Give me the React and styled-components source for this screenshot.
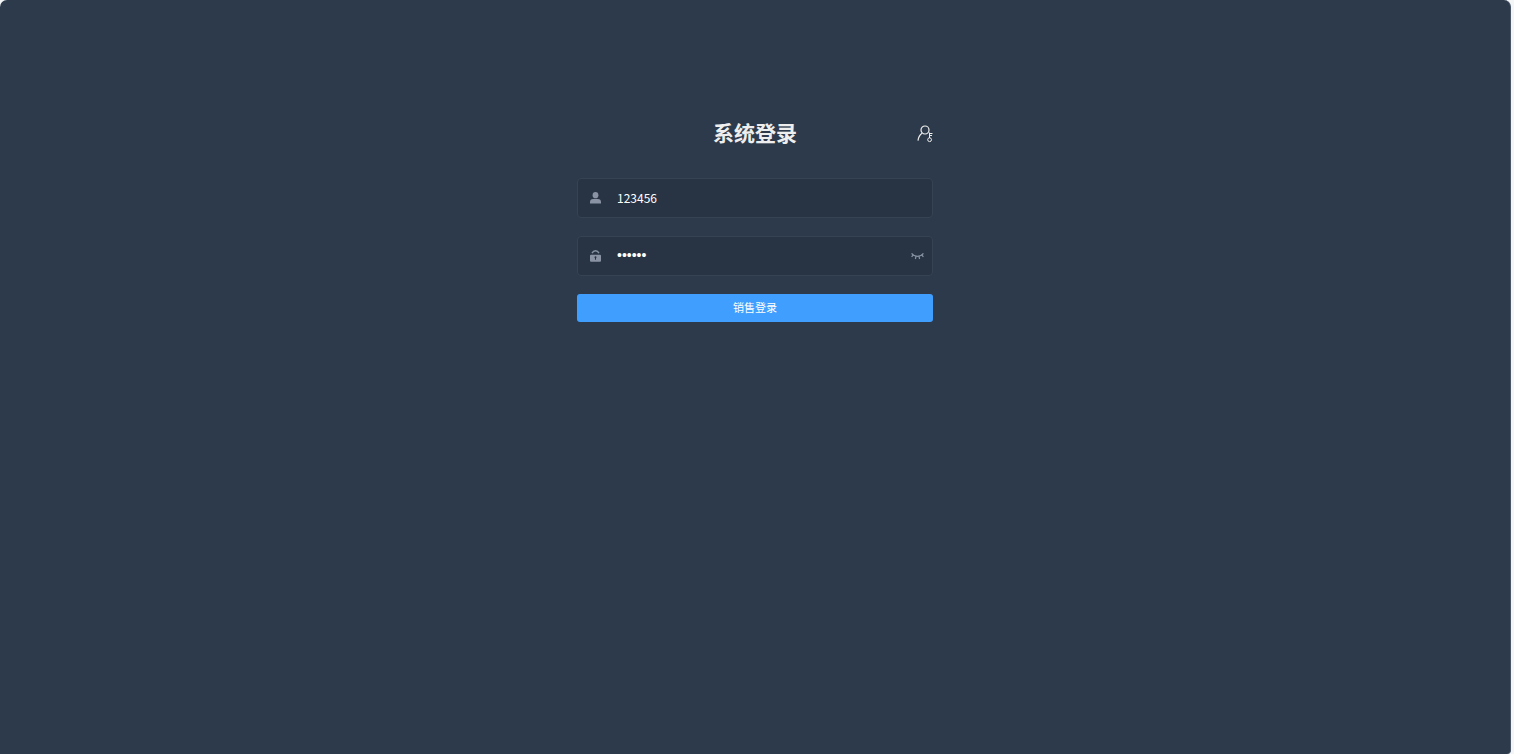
import React, { useState } from "react";
import styled, { createGlobalStyle } from "styled-components";

const Colors = {
    PAGE: "#f3f5f7",
    BACKGROUND: "#2d3a4b",
    EDGE: "#4a5666",
    FIELD: "#283443",
    FIELD_BORDER: "#364353",
    ICON: "#8993a3",
    TITLE: "#eeeeee",
    TEXT: "#ffffff",
    PRIMARY: "#409eff",
};

const GlobalStyle = createGlobalStyle`
    * {
        box-sizing: border-box;
    }

    body {
        margin: 0;
        background-color: ${Colors.PAGE};
        font-family: "Noto Sans CJK SC", sans-serif;
    }
`;

const Page = styled.main`
    min-height: 100vh;
    margin-right: 3px;
    padding: 116px 24px 24px;
    border-right: 1px solid ${Colors.EDGE};
    border-radius: 7px 7px 4px 0;
    background-color: ${Colors.BACKGROUND};
`;

const LoginForm = styled.form`
    width: 100%;
    max-width: 356px;
    margin: 0 auto;
    display: flex;
    flex-direction: column;
    gap: 18px;
`;

const Header = styled.div`
    display: grid;
    grid-template-columns: 1fr auto 1fr;
    align-items: start;
    height: 36px;
    margin-bottom: 8px;
`;

const Title = styled.h1`
    grid-column: 2;
    margin: 0;
    color: ${Colors.TITLE};
    font-size: 21px;
    line-height: 32px;
    font-weight: 700;
`;

const IconButton = styled.button`
    display: flex;
    align-items: center;
    justify-self: end;
    height: 36px;
    padding: 0;
    border: none;
    background: none;
    color: ${(props) => props.$color};
    cursor: pointer;
`;

const Field = styled.div`
    display: flex;
    align-items: center;
    height: 40px;
    padding: 0 8px 0 11px;
    border: 1px solid ${Colors.FIELD_BORDER};
    border-radius: 4px;
    background-color: ${Colors.FIELD};
`;

const FieldLabel = styled.label`
    display: flex;
    width: 28px;
    color: ${Colors.ICON};
`;

const Input = styled.input`
    flex: 1;
    min-width: 0;
    height: 38px;
    padding: 0 0 2px;
    border: none;
    outline: none;
    background: none;
    color: ${Colors.TEXT};
    font-family: ${(props) => (props.type === "password" ? '"Liberation Sans", sans-serif' : "inherit")};
    font-size: ${(props) => (props.type === "password" ? "14px" : "12px")};
`;

const LoginButton = styled.button`
    height: 28px;
    padding: 0 12px 2px;
    border: none;
    border-radius: 3px;
    background-color: ${Colors.PRIMARY};
    color: ${Colors.TEXT};
    font-family: inherit;
    font-size: 11px;
    cursor: pointer;
`;

function SwitchUserIcon() {
    return (
        <svg width="16" height="18" viewBox="0 0 16 18" fill="none" stroke="currentColor" aria-hidden="true">
            <circle cx="8" cy="5" r="4" strokeWidth="1.2" />
            <path d="M5 8.2C2.8 9.8 1.4 12 1 15.6" strokeWidth="1.2" />
            <circle cx="12.6" cy="14.7" r="1.9" />
            <path d="M12.500 13V7.500M12.500 8.500h3M12.500 10.500h2.500" />
        </svg>
    );
}

function UserIcon() {
    return (
        <svg width="13" height="12" viewBox="0 0 13 12" fill="currentColor" aria-hidden="true">
            <ellipse cx="6.5" cy="3.2" rx="2.9" ry="3.1" />
            <path d="M1 11.6V10c0-2 1.2-3 3-3h5c1.800 0 3 1 3 3v1.600z" />
        </svg>
    );
}

function LockIcon() {
    return (
        <svg width="13" height="12" viewBox="0 0 13 12" aria-hidden="true">
            <path d="M3 3.200C4 1.400 5 .8 6.500.8S9 1.400 10 3.200" fill="none" stroke="currentColor" strokeWidth="1.400" />
            <path
                d="M2 4.800h9a1 1 0 0 1 1 1v4.900a1 1 0 0 1-1 1H2a1 1 0 0 1-1-1V5.800a1 1 0 0 1 1-1zM5.500 7.300c0 .5.200.8.500 1v1.500h1V8.300c.3-.2.500-.5.500-1a1 1 0 0 0-2 0z"
                fill="currentColor"
                fillRule="evenodd"
            />
        </svg>
    );
}

function ClosedEyeIcon() {
    return (
        <svg
            width="13"
            height="8"
            viewBox="0 0 13 8"
            fill="none"
            stroke="currentColor"
            strokeWidth="1.2"
            aria-hidden="true"
        >
            <path d="M.6 1.300C3.600 5.400 9.400 5.400 12.400 1.300M2.200 3 .6 4.800M10.800 3l1.600 1.800M5 4.300 4.400 7M8 4.300l.6 2.700" />
        </svg>
    );
}

export default function App() {
    const [username, setUsername] = useState("123456");
    const [password, setPassword] = useState("123456");
    const [visible, setVisible] = useState(false);

    return (
        <>
            <GlobalStyle />
            <Page>
                <LoginForm onSubmit={(e) => e.preventDefault()}>
                    <Header>
                        <Title>系统登录</Title>
                        <IconButton type="button" $color={Colors.TITLE} aria-label="切换用户">
                            <SwitchUserIcon />
                        </IconButton>
                    </Header>

                    <Field>
                        <FieldLabel htmlFor="username" aria-label="用户名">
                            <UserIcon />
                        </FieldLabel>
                        <Input
                            id="username"
                            type="text"
                            value={username}
                            onChange={(e) => setUsername(e.target.value)}
                        />
                    </Field>

                    <Field>
                        <FieldLabel htmlFor="password" aria-label="密码">
                            <LockIcon />
                        </FieldLabel>
                        <Input
                            id="password"
                            type={visible ? "text" : "password"}
                            value={password}
                            onChange={(e) => setPassword(e.target.value)}
                        />
                        <IconButton
                            type="button"
                            $color={Colors.ICON}
                            aria-label="显示密码"
                            onClick={() => setVisible(!visible)}
                        >
                            <ClosedEyeIcon />
                        </IconButton>
                    </Field>

                    <LoginButton type="submit">销售登录</LoginButton>
                </LoginForm>
            </Page>
        </>
    );
}
